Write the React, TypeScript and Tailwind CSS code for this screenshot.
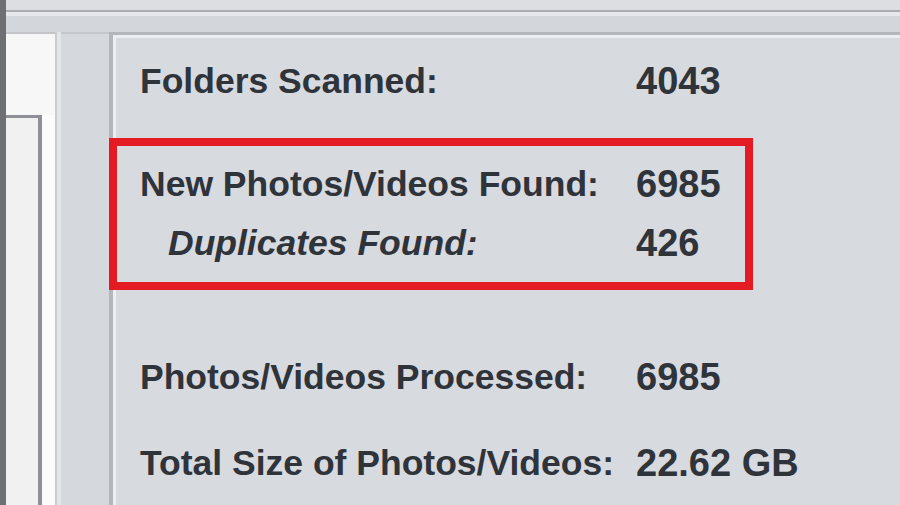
import React from 'react';

type Row = { label: string; value: string; italic?: boolean; mt: string };

const rows: Row[] = [
    { label: 'Folders Scanned:', value: '4043', mt: 'mt-[23px]' },
    { label: 'New Photos/Videos Found:', value: '6985', mt: 'mt-[63px]' },
    { label: 'Duplicates Found:', value: '426', italic: true, mt: 'mt-[19px]' },
    { label: 'Photos/Videos Processed:', value: '6985', mt: 'mt-[94px]' },
    { label: 'Total Size of Photos/Videos:', value: '22.62 GB', mt: 'mt-[46px]' },
];

const App = () => {
    return (
        <div
            className="flex h-[505px] w-[900px] overflow-hidden bg-[#d7dadf] text-[#2f333a]"
            style={{ fontFamily: '"Liberation Sans", Arial, sans-serif' }}
        >
            {/* dark window edge */}
            <div className="w-[6px] shrink-0 bg-[#6e6f72]" />

            <div className="flex flex-1 flex-col">
                {/* toolbar strip */}
                <div className="h-[10px] shrink-0 bg-[#dddee2]" />
                <div className="h-[2px] shrink-0 bg-[#a9acb1]" />
                <div className="h-[4px] shrink-0 bg-[#e6e8eb]" />
                <div className="h-[16px] shrink-0 bg-[#d3d6db]" />

                <div className="flex flex-1">
                    {/* sidebar */}
                    <div className="flex w-[49px] shrink-0 flex-col border-t-[2px] border-[#c3c5c9] bg-[#f7f7f7]">
                        <div className="h-[81px] shrink-0" />
                        <div className="flex flex-1">
                            <div className="w-[36px] border-t-[3px] border-r-[4px] border-[#8e9095] bg-[#f1f1f2]" />
                            <div className="flex-1 bg-[#fbfbfb]" />
                        </div>
                    </div>
                    <div className="w-[6px] shrink-0 border-l-[2px] border-[#c9cbcf] bg-[#e3e5e8]" />
                    <div className="w-[48px] shrink-0 border-t-[2px] border-[#c3c6cb] bg-[#d5d8dd]" />

                    {/* stats panel */}
                    <div className="relative flex-1 border-t-[3px] border-l-[4px] border-[#b3b6bb] bg-[#d7dadf]">
                        <div className="h-full border-t-[3px] border-l-[3px] border-[#eceef1] pl-[24px]">
                            {rows.map((r) => (
                                <div key={r.label} className={`flex h-[40px] items-center ${r.mt}`}>
                                    <div
                                        className={`w-[496px] shrink-0 text-[35.5px] font-bold leading-[40px] ${
                                            r.italic ? 'pl-[28px] italic' : ''
                                        }`}
                                    >
                                        {r.label}
                                    </div>
                                    <div className="text-[38px] font-bold leading-[40px]">{r.value}</div>
                                </div>
                            ))}
                        </div>

                        {/* highlight annotation */}
                        <div className="absolute left-[-4px] top-[103px] h-[152px] w-[644px] border-[8px] border-[#e41b22]" />
                    </div>
                </div>
            </div>
        </div>
    );
};

export default App;
